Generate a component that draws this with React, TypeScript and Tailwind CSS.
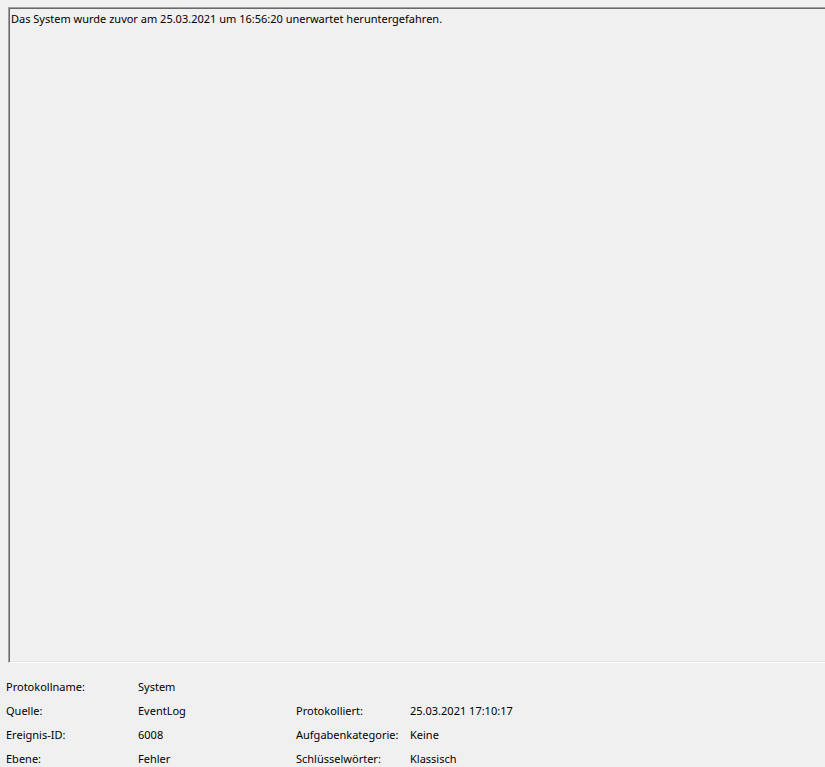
const rows: [string, string, string?, string?][] = [
  ["Protokollname:", "System"],
  ["Quelle:", "EventLog", "Protokolliert:", "25.03.2021 17:10:17"],
  ["Ereignis-ID:", "6008", "Aufgabenkategorie:", "Keine"],
  ["Ebene:", "Fehler", "Schlüsselwörter:", "Klassisch"],
];

export default function App() {
  return (
    <div className="w-[825px] h-[767px] bg-[#f0f0f0] overflow-hidden text-[11px] text-black font-['Noto_Sans','Liberation_Sans',sans-serif]">
      <div className="ml-[8px] mt-[7px] w-[830px] h-[656px] border-t border-l border-b border-[#a0a0a0] border-b-white shadow-[inset_1px_1px_0_#696969,inset_0_-1px_0_#e3e3e3] pl-[2px] pt-[3px]">
        <p className="leading-[16px]">
          Das System wurde zuvor am 25.03.2021 um 16:56:20 unerwartet heruntergefahren.
        </p>
      </div>
      <div className="grid grid-cols-[132px_158px_114px_1fr] pl-[6px] pt-[12px]">
        {rows.map((r, i) => (
          <div key={i} className="contents">
            <div className="h-[24px] leading-[24px]">{r[0]}</div>
            <div className="h-[24px] leading-[24px]">{r[1]}</div>
            <div className="h-[24px] leading-[24px]">{r[2] ?? ""}</div>
            <div className="h-[24px] leading-[24px]">{r[3] ?? ""}</div>
          </div>
        ))}
      </div>
    </div>
  );
}
